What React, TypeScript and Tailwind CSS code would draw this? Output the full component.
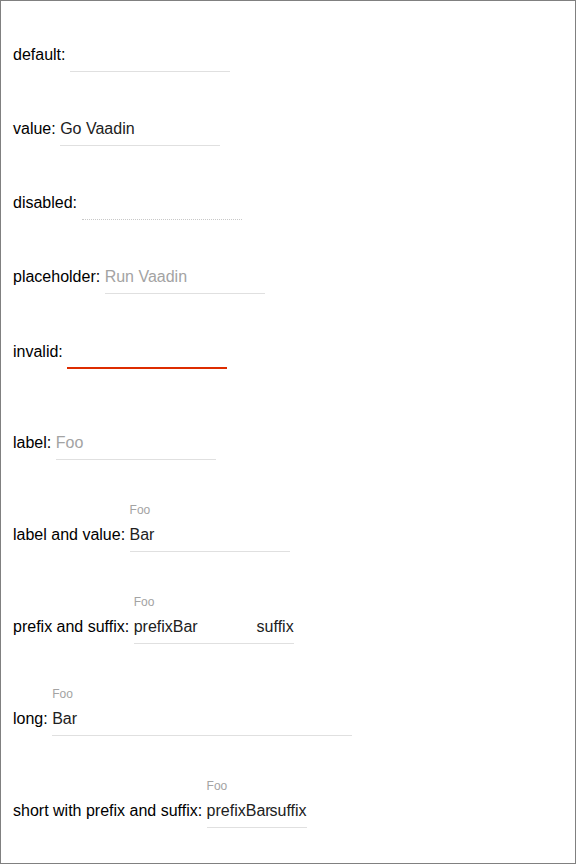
import React from "react";

type FieldProps = {
  width: string;
  label?: string;
  floating?: boolean;
  value?: string;
  placeholder?: string;
  prefix?: string;
  suffix?: string;
  line?: string;
};

function Field({
  width,
  label,
  floating,
  value,
  placeholder,
  prefix,
  suffix,
  line = "h-[27px] pb-[6px] border-b border-[#e0e0e0]",
}: FieldProps) {
  // label text shown in the input slot when the field is empty
  const ghost = placeholder || (label && !floating ? label : "");
  return (
    <div className={`flex flex-col ${width}`}>
      {label && (
        <div className="text-[12px] leading-[15px] pt-[2px] mb-[7px] text-[#a3a3a3]">
          {floating ? label : "\u00a0"}
        </div>
      )}
      <div className={`flex box-border leading-[20px] ${line}`}>
        {prefix && <span className="whitespace-nowrap text-[#212121]">{prefix}</span>}
        <span className="flex-1 min-w-0 whitespace-nowrap overflow-visible">
          {value ? (
            <span className="text-[#212121]">{value}</span>
          ) : (
            <span className="text-[#a3a3a3]">{ghost}</span>
          )}
        </span>
        {suffix && <span className="whitespace-nowrap text-[#212121]">{suffix}</span>}
      </div>
    </div>
  );
}

function Row({ name, className, children }: { name: string; className: string; children: React.ReactNode }) {
  return (
    <div className={`flex items-end ${className}`}>
      <span className="leading-[20px] pb-[7px] whitespace-nowrap">{name}:{"\u00a0"}</span>
      {children}
    </div>
  );
}

export default function App() {
  return (
    <div className="w-[576px] h-[864px] box-border border border-[#808080] bg-white pl-[12px] pt-[44px] font-['Liberation_Sans',Arial,sans-serif] text-[16px] text-black">
      <Row name="default" className="">
        <Field width="w-[160px]" />
      </Row>
      <Row name="value" className="mt-[47px]">
        <Field width="w-[160px]" value="Go Vaadin" />
      </Row>
      <Row name="disabled" className="mt-[47px]">
        <Field width="w-[160px]" line="h-[27px] pb-[6px] border-b border-dotted border-[#c8c8c8]" />
      </Row>
      <Row name="placeholder" className="mt-[47px]">
        <Field width="w-[160px]" placeholder="Run Vaadin" />
      </Row>
      <Row name="invalid" className="mt-[48px]">
        <Field width="w-[160px]" line="h-[27px] pb-[5px] border-b-2 border-[#dd2c00]" />
      </Row>
      <Row name="label" className="mt-[40px]">
        <Field width="w-[160px]" label="Foo" />
      </Row>
      <Row name="label and value" className="mt-[41px]">
        <Field width="w-[160px]" label="Foo" floating value="Bar" />
      </Row>
      <Row name="prefix and suffix" className="mt-[41px]">
        <Field width="w-[160px]" label="Foo" floating value="Bar" prefix="prefix" suffix="suffix" />
      </Row>
      <Row name="long" className="mt-[41px]">
        <Field width="w-[300px]" label="Foo" floating value="Bar" />
      </Row>
      <Row name="short with prefix and suffix" className="mt-[41px]">
        <Field width="w-[100px]" label="Foo" floating value="Bar" prefix="prefix" suffix="suffix" />
      </Row>
    </div>
  );
}
